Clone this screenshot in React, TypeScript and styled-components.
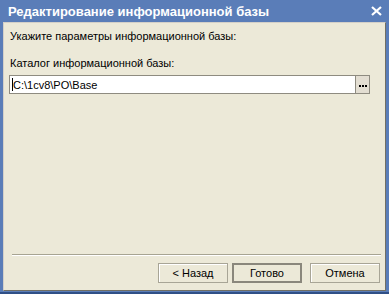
import styled, { createGlobalStyle } from 'styled-components';

const GlobalStyle = createGlobalStyle`
    html, body {
        margin: 0;
        padding: 0;
        background: #5a7db8;
    }
    body {
        font-family: 'Liberation Sans', Arial, sans-serif;
        font-size: 11px;
    }
`;

function App() {
    return (
        <>
            <GlobalStyle />
            <Window>
                <TitleBar>
                    <Title>Редактирование информационной базы</Title>
                    <Close>
                        <svg width="11" height="10" viewBox="0 0 11 10">
                            <path d="M1 1 L10 9 M10 1 L1 9" stroke="#fff" strokeWidth="2.2" />
                        </svg>
                    </Close>
                </TitleBar>

                <Body>
                    <Caption>Укажите параметры информационной базы:</Caption>

                    <Label>Каталог информационной базы:</Label>
                    <Field>
                        <Input>
                            <Caret />
                            C:\1cv8\PO\Base
                        </Input>
                        <Browse>
                            <Dot />
                            <Dot />
                            <Dot />
                        </Browse>
                    </Field>

                    <Spacer />

                    <Separator />
                    <Buttons>
                        <Button>&lt; Назад</Button>
                        <Button $default>Готово</Button>
                        <Button $wide>Отмена</Button>
                    </Buttons>
                </Body>
            </Window>
        </>
    );
}

export default App;



const Window = styled.div`
    width: 389px;
    height: 294px;
    box-sizing: border-box;
    display: flex;
    flex-direction: column;
    background: #5a7db8;
    border-bottom: 2px solid #2f4f86;
    padding: 0 3px 1px 3px;
`;

const TitleBar = styled.div`
    height: 22px;
    display: flex;
    align-items: center;
    justify-content: space-between;
    padding: 0 3px 0 5px;
`;

const Title = styled.div`
    font-family: 'Liberation Sans', Arial, sans-serif;
    font-weight: 700;
    font-size: 13px;
    color: #ffffff;
    white-space: nowrap;
`;

const Close = styled.div`
    display: flex;
    align-items: center;
    padding-right: 1px;
`;

const Body = styled.div`
    flex: 1;
    display: flex;
    flex-direction: column;
    background: #ece9d8;
    border-top: 1px solid #d4d0c8;
    border-left: 1px solid #d4d0c8;
    border-right: 1px solid #716f64;
    border-bottom: 1px solid #716f64;
    padding: 7px 4px 7px 5px;
`;

const Caption = styled.div`
    color: #000;
    line-height: 13px;
    margin-left: 1px;
`;

const Label = styled.div`
    color: #000;
    line-height: 13px;
    margin: 14px 0 5px 1px;
`;

const Field = styled.div`
    display: flex;
    height: 19px;
    margin-right: 11px;
`;

const Input = styled.div`
    flex: 1;
    display: flex;
    align-items: center;
    background: #fff;
    border: 1px solid #8e8b80;
    border-right: none;
    padding-left: 2px;
    font-size: 11px;
    color: #000;
`;

const Caret = styled.span`
    width: 1px;
    height: 13px;
    background: #000;
`;

const Browse = styled.div`
    width: 15px;
    box-sizing: border-box;
    display: flex;
    align-items: center;
    justify-content: center;
    gap: 1px;
    padding-top: 3px;
    background: #e3ded2;
    border: 1px solid #8e8b80;
`;

const Dot = styled.span`
    width: 2px;
    height: 2px;
    background: #000;
`;

const Spacer = styled.div`
    flex: 1;
`;

const Separator = styled.div`
    height: 1px;
    background: #a7a492;
    border-bottom: 1px solid #fff;
    margin: 0 0 7px 3px;
`;

const Buttons = styled.div`
    display: flex;
    justify-content: flex-end;
    gap: 4px;
    margin-right: 1px;
`;

const Button = styled.div<{ $default?: boolean; $wide?: boolean }>`
    width: 70px;
    height: 20px;
    box-sizing: border-box;
    display: flex;
    align-items: center;
    justify-content: center;
    background: #ece9d8;
    border: ${({ $default }) => ($default ? '2px solid #8a877c' : '1px solid #a8a596')};
    box-shadow: ${({ $default }) => ($default ? 'none' : 'inset 1px 1px 0 #fff')};
    margin-left: ${({ $wide }) => ($wide ? '4px' : '0')};
    color: #000;
    font-size: 11px;
`;
